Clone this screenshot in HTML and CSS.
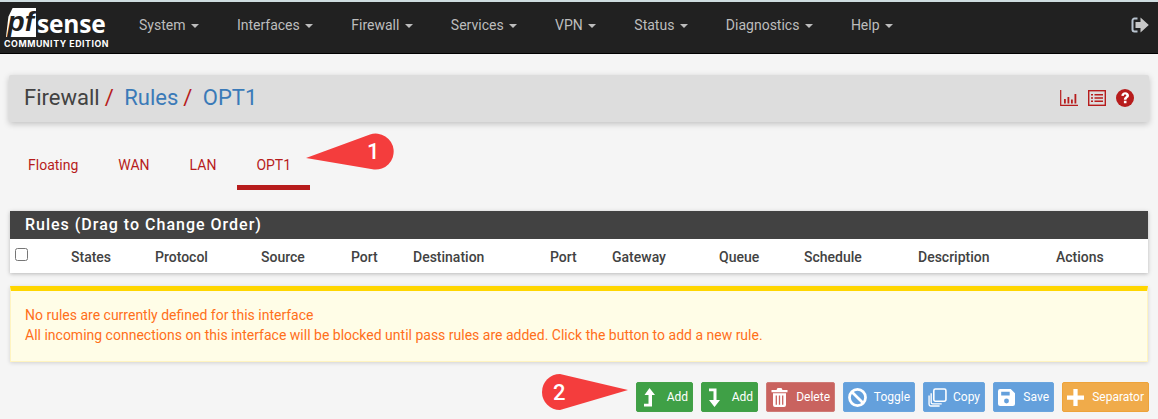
FILE: index.html
```html
<!DOCTYPE html>
<html lang="en">
<head>
<meta charset="utf-8">
<title>Firewall / Rules / OPT1</title>
<link rel="stylesheet" href="styles.css">
</head>
<body>
<nav class="navbar">
  <a class="logo" href="#">
    <span class="logo-top"><span class="logo-pf">pf</span><span class="logo-sense">sense</span></span>
    <span class="logo-sub">COMMUNITY EDITION</span>
  </a>
  <ul class="menu">
    <li>System <i class="caret"></i></li>
    <li>Interfaces <i class="caret"></i></li>
    <li>Firewall <i class="caret"></i></li>
    <li>Services <i class="caret"></i></li>
    <li>VPN <i class="caret"></i></li>
    <li>Status <i class="caret"></i></li>
    <li>Diagnostics <i class="caret"></i></li>
    <li>Help <i class="caret"></i></li>
  </ul>
  <svg class="logout" viewBox="0 0 18 16" aria-hidden="true">
    <path d="M6.500 1.500H3.500A2 2 0 0 0 1.500 3.500V12.500A2 2 0 0 0 3.500 14.500H6.500" fill="none" stroke="#b9c4d0" stroke-width="2"/>
    <path d="M4.500 5H9.500V0.500L17.800 8L9.500 15.500V11H4.500Z" fill="#c9c9c9"/>
  </svg>
</nav>

<header class="crumbs">
  <h1><span class="crumb-plain">Firewall</span><span class="slash">/</span><a href="#">Rules</a><span class="slash">/</span><a href="#">OPT1</a></h1>
  <div class="crumb-icons">
    <svg viewBox="0 0 18 16" aria-hidden="true"><path d="M0.700 0V15.300H18" fill="none" stroke="#b71c1c" stroke-width="1.200"/><path d="M4 9h1.800v4.500H4zM7.500 7h1.800v6.500H7.500zM11 9.500h1.800v4H11zM14.500 4h1.800v9.500H14.500z" fill="#b71c1c"/></svg>
    <svg viewBox="0 0 18 16" aria-hidden="true"><rect x="0.700" y="0.700" width="16.600" height="14.600" fill="none" stroke="#b71c1c" stroke-width="1.400"/><path d="M3 4h2v1.500H3zM6.500 4H15v1.500H6.500zM3 7.300h2v1.500H3zM6.500 7.300H15v1.500H6.500zM3 10.600h2v1.500H3zM6.500 10.600H15v1.500H6.500z" fill="#b71c1c"/></svg>
    <svg viewBox="0 0 18 18" aria-hidden="true"><circle cx="9" cy="9" r="9" fill="#b71c1c"/><path d="M5.300 6.800C5.500 4.600 7.100 3.300 9.200 3.300C11.400 3.300 13 4.600 13 6.500C13 8.900 10.500 8.900 10.500 10.800H7.900C7.900 8 10.300 7.800 10.300 6.600C10.300 6 9.800 5.600 9.100 5.600C8.400 5.600 7.900 6.100 7.800 7ZM7.900 11.800H10.500V14.300H7.900Z" fill="#fff"/></svg>
  </div>
</header>

<ul class="tabs">
  <li>Floating</li>
  <li>WAN</li>
  <li>LAN</li>
  <li class="active">OPT1</li>
</ul>

<section class="panel">
  <h2 class="panel-title">Rules (Drag to Change Order)</h2>
  <div class="table-head">
    <span><input class="check" type="checkbox"></span>
    <span>States</span>
    <span>Protocol</span>
    <span>Source</span>
    <span>Port</span>
    <span>Destination</span>
    <span>Port</span>
    <span>Gateway</span>
    <span>Queue</span>
    <span>Schedule</span>
    <span>Description</span>
    <span>Actions</span>
  </div>
</section>

<div class="alert">
  No rules are currently defined for this interface<br>
  All incoming connections on this interface will be blocked until pass rules are added. Click the button to add a new rule.
</div>

<div class="actions">
  <button class="btn green add"><svg viewBox="0 0 12 19" aria-hidden="true"><path d="M6.500 0L12 7H9V18.500H1V15.800H5.500V7H1.500Z" fill="#fff"/></svg>Add</button>
  <button class="btn green add"><svg viewBox="0 0 12 19" aria-hidden="true"><path d="M1 0.500H8.500V12H12L6.500 19L1 12H5.500V3.200H1Z" fill="#fff"/></svg>Add</button>
  <button class="btn red del"><svg viewBox="0 0 17 20" aria-hidden="true"><path d="M0.500 3H5.500L6.500 1H10.500L11.500 3H16.500V5.200H0.500ZM2 6.300H15V18A2 2 0 0 1 13 20H4A2 2 0 0 1 2 18Z" fill="#fff"/><path d="M5.300 8.500V17.800M8.500 8.500V17.800M11.700 8.500V17.800" stroke="#c9635f" stroke-width="1.300"/></svg>Delete</button>
  <button class="btn blue tog"><svg viewBox="0 0 18 18" aria-hidden="true"><circle cx="9" cy="9" r="7.600" fill="none" stroke="#fff" stroke-width="2.600"/><path d="M4 4L14 14" stroke="#fff" stroke-width="2.600"/></svg>Toggle</button>
  <button class="btn blue cop"><svg viewBox="0 0 18 18" aria-hidden="true"><path d="M5.500 2.500A1.500 1.500 0 0 1 7 1H15.500A1.500 1.500 0 0 1 17 2.500V11A1.500 1.500 0 0 1 15.500 12.500H7A1.500 1.500 0 0 1 5.500 11Z" fill="none" stroke="#fff" stroke-width="1.500"/><path d="M3 5V13.500A1.500 1.500 0 0 0 4.500 15H13M1 7V15.500A1.500 1.500 0 0 0 2.500 17H11" fill="none" stroke="#fff" stroke-width="1.300"/></svg>Copy</button>
  <button class="btn blue sav"><svg viewBox="0 0 16 16" aria-hidden="true"><path fill-rule="evenodd" d="M2 0H12L16 4V14A2 2 0 0 1 14 16H2A2 2 0 0 1 0 14V2A2 2 0 0 1 2 0ZM3 2.500V6H11V2.500ZM8 9A2.300 2.300 0 1 0 8 13.600A2.300 2.300 0 1 0 8 9Z" fill="#fff"/></svg>Save</button>
  <button class="btn orange sep"><svg viewBox="0 0 16 16" aria-hidden="true"><path d="M6 0H10V6H16V10H10V16H6V10H0V6H6Z" fill="#fff"/></svg>Separator</button>
</div>

<svg class="callout callout-one" viewBox="0 0 90 38" aria-hidden="true"><path d="M0 25L64 1.500A18 18 0 1 1 68 36.500Z" fill="#f43d3d"/></svg>
<span class="callout-num num-one">1</span>
<svg class="callout callout-two" viewBox="0 0 90 40" aria-hidden="true"><path d="M87 19L19 3A18 18 0 1 0 19 39Z" fill="#f43d3d"/></svg>
<span class="callout-num num-two">2</span>
</body>
</html>
```

FILE: styles.css
```css
* { box-sizing: border-box; }

html, body { height: 419px; overflow: hidden; }

body {
  margin: 0;
  position: relative;
  background: #f5f5f5;
  font-family: Roboto, "Liberation Sans", sans-serif;
  font-size: 14px;
  color: #212121;
  border-top: 2px solid #cfdde0;
}

a { color: #3a7ab8; text-decoration: none; }

ul { list-style: none; margin: 0; padding: 0; }

.navbar {
  height: 52px;
  display: flex;
  align-items: center;
  padding-bottom: 6px;
  background: #212121;
  border-bottom: 1px solid #000;
}

.logo {
  width: 120px;
  align-self: flex-start;
  padding: 6px 0 0 4px;
  display: flex;
  flex-direction: column;
  flex: none;
}

.logo-top { display: flex; align-items: flex-end; height: 29px; padding-left: 2px; }

.logo-pf {
  width: 30px;
  height: 29px;
  padding: 0 2px 0 0;
  background: #fff;
  color: #212121;
  font: italic 700 28px/28px "Liberation Sans", sans-serif;
  text-align: right;
  clip-path: polygon(22% 0, 100% 0, 100% 100%, 0 100%, 8% 30%);
}

.logo-sense {
  color: #fff;
  font: 700 24.500px/26px "Open Sans", "Liberation Sans", sans-serif;
  letter-spacing: -0.2px;
  margin-left: 1px;
}

.logo-sub {
  color: #fff;
  font: 700 8.800px/10px Inter, "Liberation Sans", sans-serif;
  letter-spacing: 0.55px;
  white-space: nowrap;
  margin-top: 2px;
}

.menu { display: flex; flex: 1; }

.menu li {
  padding: 0 19px;
  color: #bdbdbd;
  white-space: nowrap;
  line-height: 20px;
}

.caret {
  display: inline-block;
  vertical-align: middle;
  margin-left: 2px;
  border-top: 4px solid #bdbdbd;
  border-left: 4px solid transparent;
  border-right: 4px solid transparent;
}

.logout { width: 18px; height: 16px; margin-right: 9px; flex: none; }

.crumbs {
  margin: 21px 9px 0;
  height: 47px;
  padding: 0 15px 2px;
  display: flex;
  align-items: center;
  justify-content: space-between;
  background: #ddd;
  border-radius: 2px;
  box-shadow: 0 2px 6px rgba(0, 0, 0, 0.22);
}

.crumbs h1 {
  margin: 0;
  font-size: 22px;
  font-weight: 400;
  line-height: 28px;
  color: #424242;
}

.slash { color: #b71c1c; margin: 0 10.500px 0 5px; }

.crumb-icons { display: flex; align-items: center; gap: 10px; }
.crumb-icons svg { width: 18px; height: 16px; display: block; }
.crumb-icons svg:last-child { height: 18px; }

.tabs {
  display: flex;
  margin: 19px 10px 0;
  height: 49px;
}

.tabs li {
  padding: 0 20px 0 18px;
  color: #b71c1c;
  line-height: 48px;
}

.tabs li:nth-child(2) { padding: 0 20px; }
.tabs li:nth-child(3) { padding: 0 21px 0 20px; }

.tabs li.active {
  padding: 0 19px;
  border-bottom: 5px solid #b71c1c;
}

.panel {
  margin: 21px 10px 0;
  background: #fff;
  box-shadow: 0 1px 4px rgba(0, 0, 0, 0.25);
}

.panel-title {
  margin: 0;
  height: 28px;
  padding: 0 15px;
  background: #424242;
  color: #fff;
  font-size: 16px;
  font-weight: 500;
  letter-spacing: 1px;
  line-height: 28px;
}

.table-head {
  height: 34px;
  padding-top: 1px;
  display: grid;
  grid-template-columns: 61px 84px 106px 90px 62px 137px 62px 107px 85px 114px 138px 1fr;
  align-items: center;
  font-weight: 500;
  color: #424242;
}

.check {
  display: block;
  width: 13px;
  height: 13px;
  margin: 0 0 4px 5px;
}

.alert {
  margin: 13px 10px 0;
  height: 76px;
  padding: 14px 14px 0;
  background: #fffde7;
  border-top: 5px solid #ffd600;
  border-left: 1px solid #fff4c0;
  border-right: 1px solid #fff4c0;
  border-bottom: 1px solid #fff4c0;
  color: #ff6f1a;
  line-height: 20px;
  box-shadow: 0 1px 4px rgba(0, 0, 0, 0.15);
}

.actions {
  display: flex;
  justify-content: flex-end;
  gap: 8px;
  margin: 20px 9px 0 0;
}

.btn {
  height: 30px;
  display: flex;
  align-items: center;
  justify-content: space-between;
  padding: 0 4px;
  border: 1px solid transparent;
  border-radius: 2px;
  color: #fff;
  font: 400 12px/16px Roboto, sans-serif;
}

.btn svg { flex: none; }

.green { background: #3fa046; border-color: #43a047; }
.red { background: #c9635f; border-color: #cf7a76; }
.blue { background: #64a0dc; border-color: #6aa5de; }
.orange { background: #f0ab4a; border-color: #eea33a; }

.add { width: 57px; padding: 0 4px 0 6px; }
.add svg { width: 12px; height: 19px; }
.del { width: 69px; }
.del svg { width: 17px; height: 20px; }
.tog { width: 72px; }
.tog svg { width: 19px; height: 19px; }
.cop { width: 62px; }
.cop svg { width: 19px; height: 19px; }
.sav { width: 61px; }
.sav svg { width: 17px; height: 17px; }
.sep { width: 87px; }
.sep svg { width: 17px; height: 17px; }

.callout { position: absolute; width: 90px; }
.callout-one { left: 306px; top: 131px; height: 38px; }
.callout-two { left: 541px; top: 369px; height: 40px; }

.callout-num {
  position: absolute;
  color: #fff;
  font: 500 22px/24px Roboto, sans-serif;
}

.num-one { left: 367px; top: 138px; }
.num-two { left: 553px; top: 379px; }
```
